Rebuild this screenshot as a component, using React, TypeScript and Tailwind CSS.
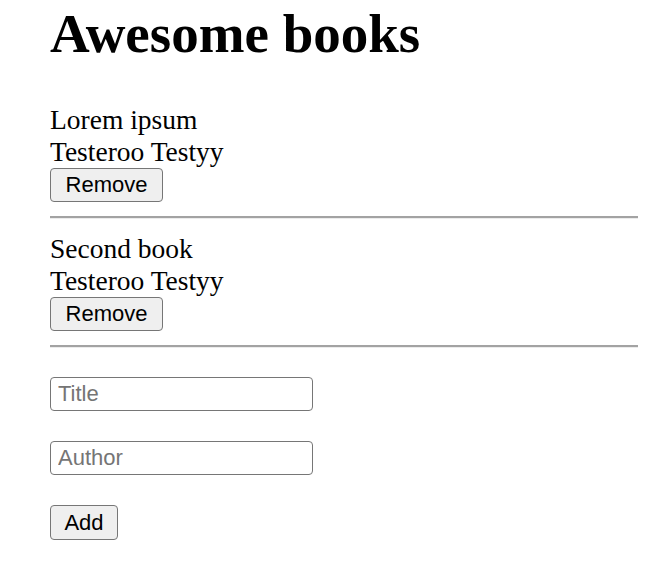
import React from "react";

type Book = { title: string; author: string };

const books: Book[] = [
  { title: "Lorem ipsum", author: "Testeroo Testyy" },
  { title: "Second book", author: "Testeroo Testyy" },
];

export default function App() {
  return (
    <div className="min-h-[588px] w-[648px] bg-white pl-[50px] pr-[10px] text-black font-['Liberation_Serif',serif]">
      <h1 className="pt-[4px] text-[55px] leading-[60px] font-bold">Awesome books</h1>

      {/* book list */}
      <ul className="mt-[40px]">
        {books.map((book, i) => (
          <li key={i} className={i > 0 ? "mt-[14px]" : ""}>
            <p className="text-[27.5px] leading-[32px]">{book.title}</p>
            <p className="text-[27.5px] leading-[32px]">{book.author}</p>
            <button className="h-[34px] w-[113px] rounded-[4px] border border-[#767676] bg-[#efefef] text-[22px] leading-none font-['Liberation_Sans',sans-serif]">
              Remove
            </button>
            <hr className="mt-[14px] border-t-2 border-b border-t-[#a3a3a3] border-b-[#ececec]" />
          </li>
        ))}
      </ul>

      {/* add form */}
      <form className="mt-[29px] flex flex-col items-start gap-[30px] font-['Liberation_Sans',sans-serif]">
        <input
          placeholder="Title"
          className="h-[34px] w-[263px] rounded-[4px] border border-[#767676] px-[7px] text-[22px] placeholder:text-[#757575]"
        />
        <input
          placeholder="Author"
          className="h-[34px] w-[263px] rounded-[4px] border border-[#767676] px-[7px] text-[22px] placeholder:text-[#757575]"
        />
        <button
          type="button"
          className="h-[35px] w-[68px] rounded-[4px] border border-[#767676] bg-[#efefef] text-[22px] leading-none"
        >
          Add
        </button>
      </form>
    </div>
  );
}
